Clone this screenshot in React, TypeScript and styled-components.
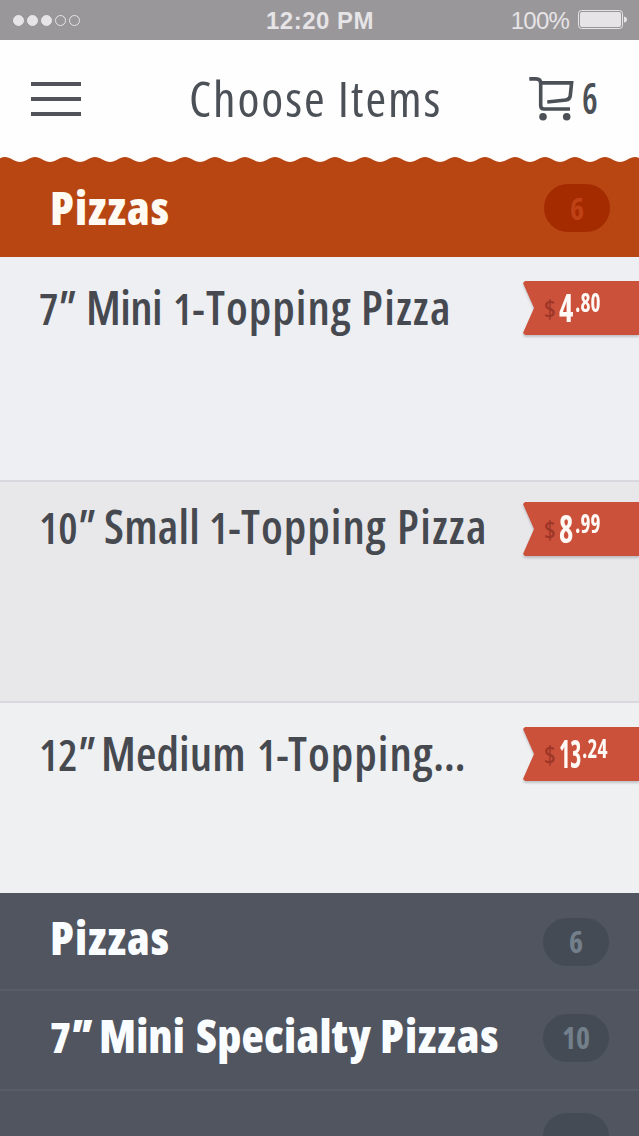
import React from 'react';
import styled, { createGlobalStyle } from 'styled-components';

const ink = '#4c5057';
const slate = '#50555f';
const chrome = '#e6e4e6';

const GlobalStyle = createGlobalStyle`
  *, *::before, *::after { box-sizing: border-box; }
  body { margin: 0; }
`;

const Screen = styled.main`
  width: 639px;
  height: 1136px;
  overflow: hidden;
  display: flex;
  flex-direction: column;
  background: ${slate};
  font-family: 'Open Sans', sans-serif;
  font-stretch: 75%;
`;

/* Status bar */

const StatusBar = styled.div`
  flex: none;
  height: 40px;
  padding: 0 12px 0 13px;
  display: grid;
  grid-template-columns: 1fr auto 1fr;
  align-items: center;
  background: #9a979a;
  color: ${chrome};
  font-family: 'Liberation Sans', sans-serif;
  line-height: 40px;
`;

const Signal = styled.div`
  display: flex;
  gap: 3px;
`;

const Dot = styled.i<{ $on: boolean }>`
  width: 11px;
  height: 11px;
  border-radius: 50%;
  border: 1px solid ${chrome};
  background: ${p => (p.$on ? chrome : 'transparent')};
`;

const Clock = styled.span`
  height: 40px;
  padding-top: 1px;
  font-size: 24px;
  font-weight: 700;
  letter-spacing: 0.5px;
`;

const Power = styled.div`
  display: flex;
  align-items: center;
  justify-content: flex-end;
  gap: 9px;
  font-size: 24px;
  letter-spacing: -0.8px;
`;

const PowerText = styled.span`
  height: 40px;
  padding-top: 1px;
`;

/* Header */

const Header = styled.header`
  flex: none;
  height: 117px;
  padding: 0 41px 0 31px;
  display: flex;
  align-items: flex-start;
  background: #fefefe;
  color: ${ink};
`;

const MenuButton = styled.button`
  width: 50px;
  height: 34px;
  margin: 42px 0 0;
  padding: 0;
  border: 0;
  background: none;
  display: flex;
  flex-direction: column;
  justify-content: space-between;
`;

const MenuLine = styled.i`
  height: 4px;
  background: #52535a;
`;

const Title = styled.h1`
  flex: 1;
  margin: 22px 0 0 108px;
  font-size: 50px;
  font-weight: 400;
  line-height: 72px;
  letter-spacing: 1.9px;
  white-space: nowrap;
`;

const Cart = styled.div`
  display: flex;
  align-items: flex-start;
  width: 69px;
`;

const CartIcon = styled.svg`
  flex: none;
  margin-top: 36px;
`;

const CartCount = styled.span`
  margin: 27px 0 0 8px;
  width: 16px;
  font-size: 44px;
  font-weight: 600;
  line-height: 60px;
  transform: scaleX(0.8);
  transform-origin: left;
`;

/* Words are spaced one by one: figures are set smaller and tighter than letters */

const Words = styled.span`
  display: flex;
  align-items: baseline;
`;

const Word = styled.span<{ $w?: number; $ls?: number; $figure?: boolean }>`
  flex: none;
  width: ${p => (p.$w ? `${p.$w}px` : 'auto')};
  letter-spacing: ${p => p.$ls ?? 0}px;
  font-size: ${p => (p.$figure ? '0.92em' : '1em')};
`;

const Inch = styled.span`
  margin-left: -2px;
  font-size: 1.08em;
  font-style: italic;
  letter-spacing: 0;
`;

/* Category bars */

const Wave = styled.svg`
  display: block;
  flex: none;
`;

const Category = styled.section<{ $height: number; $active?: boolean }>`
  flex: none;
  height: ${p => p.$height}px;
  padding-left: 50px;
  padding-right: ${p => (p.$active ? 29 : 30)}px;
  display: flex;
  justify-content: space-between;
  align-items: flex-start;
  background: ${p => (p.$active ? '#b84613' : slate)};
  border-bottom: ${p => (p.$active ? '0' : '2px solid #585e69')};
  color: ${p => (p.$active ? '#fffaf2' : '#fafdff')};
`;

const CategoryName = styled.h2`
  margin: 14px 0 0;
  font-size: 46px;
  font-weight: 800;
  line-height: 60px;
  white-space: nowrap;
`;

const Badge = styled.span<{ $top: number; $active?: boolean }>`
  flex: none;
  width: 66px;
  height: 48px;
  margin-top: ${p => p.$top}px;
  border-radius: 24px;
  background: ${p => (p.$active ? '#a42a00' : '#444b55')};
  color: ${p => (p.$active ? '#bf4116' : '#73808b')};
  font-size: 30px;
  font-weight: 700;
  line-height: ${p => (p.$active ? 49 : 47)}px;
  text-align: center;
`;

/* Menu items */

const Item = styled.article<{ $height: number; $shade: string; $last?: boolean }>`
  flex: none;
  height: ${p => p.$height}px;
  padding-left: 39px;
  display: flex;
  justify-content: space-between;
  align-items: flex-start;
  background: ${p => p.$shade};
  border-bottom: ${p => (p.$last ? '0' : '2px solid #d8d8de')};
`;

const ItemName = styled.h3<{ $top: number }>`
  margin: ${p => p.$top}px 0 0;
  color: #464a50;
  font-size: 47px;
  font-weight: 600;
  line-height: 60px;
  white-space: nowrap;
`;

const Ribbon = styled.div<{ $top: number }>`
  flex: none;
  width: 116px;
  height: 54px;
  margin-top: ${p => p.$top}px;
  filter: drop-shadow(0 2px 1px rgba(60, 60, 70, 0.25));
`;

const RibbonFace = styled.div`
  height: 54px;
  padding-left: 21px;
  display: flex;
  align-items: flex-start;
  background: #cc513b;
  clip-path: polygon(0 2px, 2px 0, 100% 0, 100% 100%, 2px 100%, 0 52px, 11px 27px);
`;

const Currency = styled.span`
  width: 15px;
  color: #9c3626;
  font-size: 26px;
  font-weight: 600;
  line-height: 54px;
`;

const Whole = styled.span<{ $digits: number }>`
  width: ${p => (p.$digits > 1 ? 23 : 16)}px;
  color: #fff9f5;
  font-size: 39px;
  font-weight: 700;
  line-height: 52px;
  white-space: nowrap;
  transform: scaleX(${p => (p.$digits > 1 ? 0.61 : 0.78)});
  transform-origin: left;
`;

const Cents = styled.span`
  color: #fff9f5;
  font-size: 27px;
  font-weight: 700;
  line-height: 42px;
  transform: scaleX(0.79);
  transform-origin: left;
`;

function Price({ whole, cents, top }: { whole: string; cents: string; top: number }) {
  return (
    <Ribbon $top={top}>
      <RibbonFace>
        <Currency>$</Currency>
        <Whole $digits={whole.length}>{whole}</Whole>
        <Cents>.{cents}</Cents>
      </RibbonFace>
    </Ribbon>
  );
}

const wavePath =
  'M-25 0' +
  Array.from({ length: 23 }, () => 'c5 0 10 5 15 5s10 -5 15 -5').join('') +
  'V6H-25Z';

export default function App() {
  return (
    <Screen>
      <GlobalStyle />
      <StatusBar>
        <Signal>
          {[true, true, true, false, false].map((on, i) => (
            <Dot key={i} $on={on} />
          ))}
        </Signal>
        <Clock>12:20 PM</Clock>
        <Power>
          <PowerText>100%</PowerText>
          <svg width="49" height="20" viewBox="0 0 49 20">
            <rect x="0.5" y="0.5" width="44" height="18" rx="3" fill="none" stroke={chrome} />
            <rect x="2" y="2" width="41" height="15" rx="2" fill={chrome} />
            <path d="M46 6.5q3 .5 3 3t-3 3z" fill={chrome} />
          </svg>
        </Power>
      </StatusBar>

      <Header>
        <MenuButton aria-label="Menu">
          <MenuLine />
          <MenuLine />
          <MenuLine />
        </MenuButton>
        <Title>Choose Items</Title>
        <Cart>
          <CartIcon width="45" height="46" viewBox="0 0 45 46" fill="none" stroke={ink} strokeWidth="3.6">
            <path d="M.3 2.9H7Q11.7 2.9 11.7 7.5V29.5Q11.7 33 15 33H41" />
            <path d="M11.7 6.9H42.6L41.3 19.5Q40.9 23.6 37 24L18.3 26" />
            <circle cx="14" cy="40.8" r="3.8" fill={ink} stroke="none" />
            <circle cx="37.7" cy="40.8" r="3.8" fill={ink} stroke="none" />
          </CartIcon>
          <CartCount>6</CartCount>
        </Cart>
      </Header>

      <Wave width="639" height="6" viewBox="0 0 639 6">
        <rect width="639" height="6" fill="#fefefe" />
        <path d={wavePath} fill="#b84613" />
      </Wave>
      <Category $height={94} $active>
        <CategoryName>
          <Word $ls={1.1}>Pizzas</Word>
        </CategoryName>
        <Badge $top={21} $active>6</Badge>
      </Category>

      <Item $height={225} $shade="#eeeff2">
        <ItemName $top={20}>
          <Words>
            <Word $w={47} $figure>7<Inch>"</Inch></Word>
            <Word $w={87} $ls={-0.6}>Mini</Word>
            <Word $w={33} $figure>1-</Word>
            <Word $w={155} $ls={1}>Topping</Word>
            <Word $ls={1.4}>Pizza</Word>
          </Words>
        </ItemName>
        <Price whole="4" cents="80" top={24} />
      </Item>
      <Item $height={221} $shade="#e8e8eb">
        <ItemName $top={14}>
          <Words>
            <Word $w={65} $figure>10<Inch>"</Inch></Word>
            <Word $w={105} $ls={0.2}>Small</Word>
            <Word $w={32} $figure>1-</Word>
            <Word $w={156} $ls={1}>Topping</Word>
            <Word $ls={1.4}>Pizza</Word>
          </Words>
        </ItemName>
        <Price whole="8" cents="99" top={20} />
      </Item>
      <Item $height={190} $shade="#eff0f2" $last>
        <ItemName $top={20}>
          <Words>
            <Word $w={62} $figure>12<Inch>"</Inch></Word>
            <Word $w={156} $ls={0.1}>Medium</Word>
            <Word $w={31} $figure>1-</Word>
            <Word $w={145} $ls={1}>Topping</Word>
            <Word $ls={-0.5}>...</Word>
          </Words>
        </ItemName>
        <Price whole="13" cents="24" top={24} />
      </Item>

      <Category $height={98}>
        <CategoryName>
          <Word $ls={1.1}>Pizzas</Word>
        </CategoryName>
        <Badge $top={25}>6</Badge>
      </Category>
      <Category $height={100}>
        <CategoryName>
          <Words>
            <Word $w={49} $figure>7<Inch>"</Inch></Word>
            <Word $w={97}>Mini</Word>
            <Word $w={184} $ls={0.25}>Specialty</Word>
            <Word $ls={1}>Pizzas</Word>
          </Words>
        </CategoryName>
        <Badge $top={23}>10</Badge>
      </Category>
      <Category $height={100}>
        <CategoryName />
        <Badge $top={22} />
      </Category>
    </Screen>
  );
}
